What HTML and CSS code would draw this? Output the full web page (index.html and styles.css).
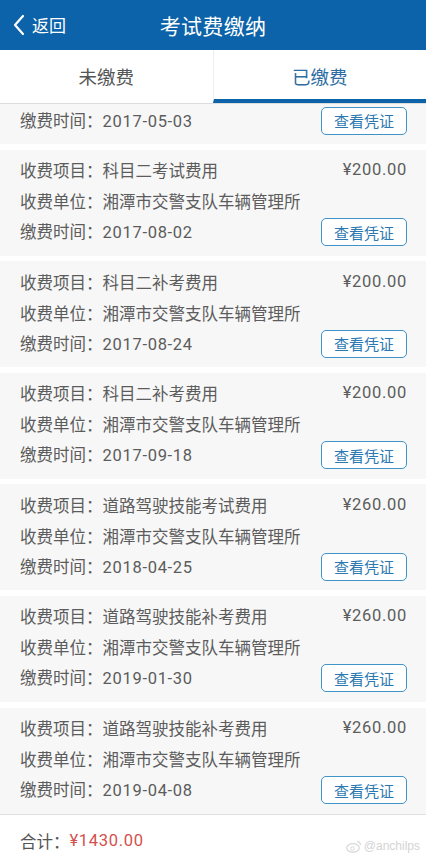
FILE: index.html
```html
<!DOCTYPE html>
<html lang="zh-CN">
<head>
  <meta charset="UTF-8" />
  <meta name="viewport" content="width=device-width, initial-scale=1.0"/>
  <title>考试费缴纳</title>
  <link rel="stylesheet" href="styles.css">
</head>
<body>

  <div class="header">
    <div class="back">
      <svg width="12" height="22" viewBox="0 0 12 22"><path d="M10 2 L2 11 L10 20" fill="none" stroke="#fff" stroke-width="2.2" stroke-linecap="round" stroke-linejoin="round"/></svg>
      返回
    </div>
    <div class="title">考试费缴纳</div>
  </div>

  <div class="tabs">
    <div class="tab"><span>未缴费</span></div>
    <div class="tab active"><span>已缴费</span></div>
  </div>

  <div class="list">
    <div class="card partial">
      <div class="row"><span>缴费时间：<span class="num">2017-05-03</span></span><button>查看凭证</button></div>
    </div>
    <div class="card">
      <div class="row"><span>收费项目：科目二考试费用</span><span class="num">¥200.00</span></div>
      <div class="row"><span>收费单位：湘潭市交警支队车辆管理所</span></div>
      <div class="row"><span>缴费时间：<span class="num">2017-08-02</span></span><button>查看凭证</button></div>
    </div>
    <div class="card">
      <div class="row"><span>收费项目：科目二补考费用</span><span class="num">¥200.00</span></div>
      <div class="row"><span>收费单位：湘潭市交警支队车辆管理所</span></div>
      <div class="row"><span>缴费时间：<span class="num">2017-08-24</span></span><button>查看凭证</button></div>
    </div>
    <div class="card">
      <div class="row"><span>收费项目：科目二补考费用</span><span class="num">¥200.00</span></div>
      <div class="row"><span>收费单位：湘潭市交警支队车辆管理所</span></div>
      <div class="row"><span>缴费时间：<span class="num">2017-09-18</span></span><button>查看凭证</button></div>
    </div>
    <div class="card">
      <div class="row"><span>收费项目：道路驾驶技能考试费用</span><span class="num">¥260.00</span></div>
      <div class="row"><span>收费单位：湘潭市交警支队车辆管理所</span></div>
      <div class="row"><span>缴费时间：<span class="num">2018-04-25</span></span><button>查看凭证</button></div>
    </div>
    <div class="card">
      <div class="row"><span>收费项目：道路驾驶技能补考费用</span><span class="num">¥260.00</span></div>
      <div class="row"><span>收费单位：湘潭市交警支队车辆管理所</span></div>
      <div class="row"><span>缴费时间：<span class="num">2019-01-30</span></span><button>查看凭证</button></div>
    </div>
    <div class="card">
      <div class="row"><span>收费项目：道路驾驶技能补考费用</span><span class="num">¥260.00</span></div>
      <div class="row"><span>收费单位：湘潭市交警支队车辆管理所</span></div>
      <div class="row"><span>缴费时间：<span class="num">2019-04-08</span></span><button>查看凭证</button></div>
    </div>
  </div>

  <div class="footer">
    合计：<span class="total num">¥1430.00</span>
    <div class="watermark">
      <svg width="16" height="13" viewBox="0 0 16 13"><ellipse cx="7" cy="8" rx="6.3" ry="4.3" fill="none" stroke="#d8d8d8" stroke-width="1.2"/><circle cx="6.5" cy="8.5" r="1.8" fill="none" stroke="#d8d8d8"/><path d="M11 1.5 A3.5 3.5 0 0 1 14.5 5" fill="none" stroke="#d8d8d8" stroke-width="1.2"/></svg>
      @anchilps
    </div>
  </div>

</body>
</html>
```

FILE: styles.css
```css
body {
  margin: 0;
  height: 866px;
  font-family: "Noto Sans CJK SC", "Noto Sans", sans-serif;
  background: #fff;
  color: #5a5a5a;
  display: flex;
  flex-direction: column;
  overflow: hidden;
}
.header {
  height: 50px;
  background: #0c63a9;
  color: #fff;
  display: flex;
  align-items: center;
  justify-content: center;
  position: relative;
  flex-shrink: 0;
}
.back {
  position: absolute;
  left: 13px;
  top: 13px;
  display: flex;
  align-items: center;
  gap: 7px;
  font-size: 17px;
  line-height: 24px;
}
.title {
  font-size: 21px;
  line-height: 28px;
  letter-spacing: 0.3px;
}
.tabs {
  height: 53px;
  display: flex;
  border-bottom: 1px solid #dcdcdc;
  flex-shrink: 0;
  background: #fff;
}
.tab {
  flex: 1;
  display: flex;
  align-items: center;
  justify-content: center;
  font-size: 18.5px;
  line-height: 24px;
  color: #555;
  border-bottom: 4px solid transparent;
  padding-top: 2px;
}
.tab + .tab {
  border-left: 1px solid #eeeeee;
}
.tab.active {
  color: #2d6da3;
  border-bottom-color: #0c63a9;
}
.list {
  flex: 1;
  overflow: hidden;
  display: flex;
  flex-direction: column;
  gap: 5.6px;
}
.card {
  background: #f7f7f7;
  padding: 5px 19px 8px 20px;
  flex-shrink: 0;
}
.card.partial {
  padding-top: 1px;
}
.row {
  height: 31px;
  display: flex;
  align-items: center;
  justify-content: space-between;
  font-size: 16.5px;
  line-height: 22px;
  color: #5c5c5c;
}
.num {
  font-family: Roboto, "Noto Sans CJK SC", sans-serif;
  letter-spacing: 0.7px;
}
button {
  width: 86px;
  height: 28px;
  background: #fff;
  border: 1px solid #3f93c6;
  border-radius: 5px;
  color: #2b78b0;
  font-family: inherit;
  font-size: 15px;
  padding: 0;
}
.footer {
  height: 51px;
  border-top: 1px solid #e0e0e0;
  display: flex;
  align-items: center;
  padding-left: 20px;
  font-size: 16.5px;
  line-height: 22px;
  color: #555;
  position: relative;
  flex-shrink: 0;
}
.total {
  color: #d2514f;
}
.watermark {
  position: absolute;
  right: 6px;
  bottom: 9px;
  display: flex;
  align-items: center;
  gap: 2px;
  font-family: "Liberation Sans", sans-serif;
  font-size: 12px;
  color: #d4d4d4;
}
```
